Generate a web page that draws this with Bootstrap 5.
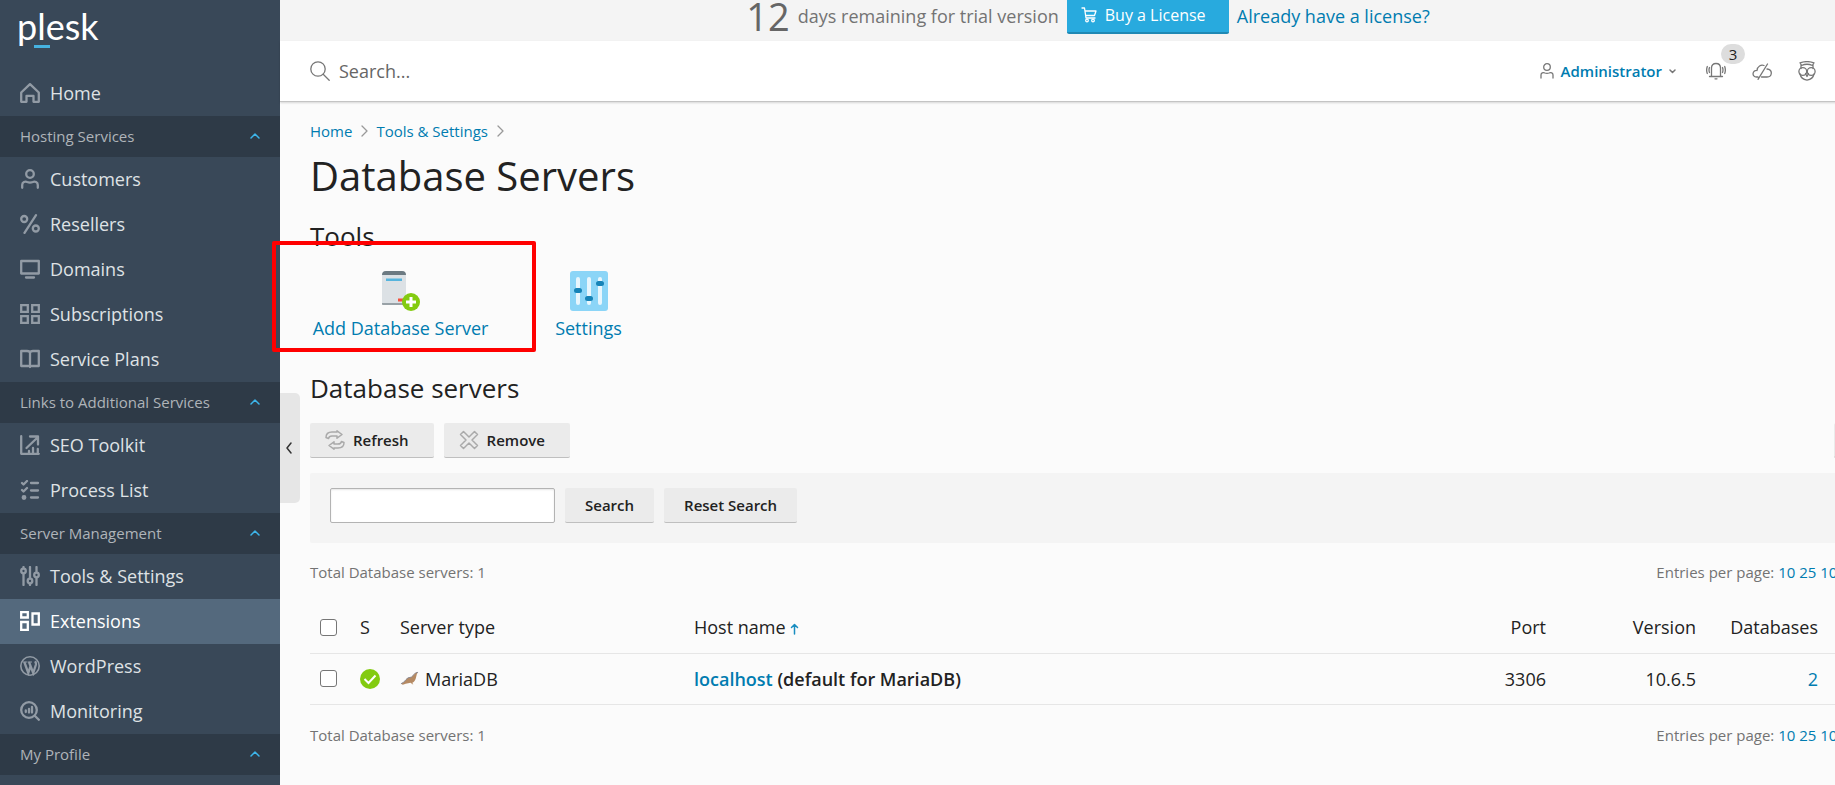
<!DOCTYPE html>
<html lang="en">
<head>
<meta charset="utf-8">
<meta name="viewport" content="width=device-width, initial-scale=1">
<title>Database Servers - Plesk</title>
<link rel="stylesheet" href="https://cdn.jsdelivr.net/npm/bootstrap@5.3.0/dist/css/bootstrap.min.css">
<style>
:root { --blue: #007cb0; --ink: #222; --muted-ink: #737373; }
body { font-family: "Open Sans", "Liberation Sans", sans-serif; font-size: 18px; line-height: 24px; color: var(--ink); background: #fbfbfb; }
a { color: var(--blue); text-decoration: none; }
a:hover { text-decoration: underline; }
svg { display: block; flex-shrink: 0; }
.shell { min-height: 100vh; overflow: hidden; }
.ln { fill: none; stroke: currentColor; stroke-width: 2; stroke-linejoin: round; stroke-linecap: round; }
.ln.thin { stroke-width: 1.3; }
.ln.mid { stroke-width: 1.5; }
.ln.square { stroke-linejoin: miter; }

.sidebar { width: 280px; background: #394858; padding-bottom: 10px; }
.logo { height: 71px; padding: 4px 17px 0; font-family: Lato, sans-serif; font-size: 36px; line-height: 44px; font-weight: 400; color: #fff; }
.logo:hover { text-decoration: none; }
.logo i { left: 34px; top: 45px; width: 16px; height: 3px; background: #46b2e0; }
.side-link { height: 45px; padding: 0 20px 1px; gap: 10px; color: #dfe2e5; }
.side-link svg { color: #929ba5; }
.side-link .ln { stroke-width: 2.3; }
.side-link.active, .side-link.active svg { color: #fff; }
.side-link.active { background: #54697d; }
.side-head { height: 41px; padding: 0 20px 2px; font-size: 15px; color: #afb4b9; background: #2e3a47; border: 0; text-align: left; }
.side-head svg { color: #3db5ea; }

.page-area { margin-right: -65px; }
.trial { height: 48px; margin-top: -7px; padding-bottom: 2px; background: #f4f4f4; color: #737373; }
.days-left { font-size: 38px; line-height: 46px; color: #666; }
.buy { height: 36px; width: 162px; padding: 0 14px; gap: 8px; font-size: 16px; color: #fff; background: #28aade; border: 0; border-bottom: 2px solid #2089b4; border-radius: 2px; }
.topbar { height: 61px; padding: 0 30px; background: #fff; border-bottom: 1px solid #c4c4c4; box-shadow: 0 1px 2px rgba(0,0,0,.15); }
.topbar svg { color: #777; }
.find-label { gap: 9px; }
.find { border: 0; outline: 0; width: 300px; padding: 0; background: transparent; }
.find::placeholder { color: #666; opacity: 1; }
.top-icons { gap: 26px; margin-right: 54px; }
.user-btn { border: 0; background: none; padding: 0; margin-right: 4px; gap: 7px; font-size: 15px; font-weight: 600; color: var(--blue); }
.icon-btn { border: 0; background: none; padding: 0; }
.count { left: 15px; top: -18px; width: 24px; height: 20px; border-radius: 10px; background: #ddd; font-size: 15px; line-height: 20px; color: #222; }

.content { padding: 17px 30px 0; }
.crumbs { font-size: 15px; gap: 8px; }
.crumbs svg { color: #999; }
h1 { font-size: 40px; line-height: 52px; font-weight: 400; margin: 7px 0 17px; }
h2 { font-size: 26px; line-height: 34px; font-weight: 500; margin: 0; }
.tools { gap: 64px; margin: 18px 0 31px; }
.tool-item { gap: 5px; min-width: 67px; }
.tool-item.first { min-width: 181px; }
.mark-box { left: -38px; top: -30px; width: 264px; height: 111px; border: 4px solid #f00; border-radius: 2px; pointer-events: none; }
.actions { margin-top: 18px; }
.actions, .actions > div, .filter { gap: 10px; }
.gbtn { height: 35px; padding: 0 20px; font-size: 15px; font-weight: 600; color: var(--ink); background: #ebebeb; border: 0; border-bottom: 1px solid #bfbfbf; border-radius: 2px; }
.gbtn.with-icon { padding: 0 25px 0 15px; gap: 8px; }
.gbtn.narrow { width: 36px; padding: 0; }
.gbtn svg { color: #aaa; }
.filter { margin: 15px 0 17px; padding: 15px 20px 20px; background: #f4f4f4; border-radius: 2px; }
.filter input { width: 225px; height: 35px; border: 1px solid #b3b3b3; border-radius: 2px; background: #fff; box-shadow: inset 0 1px 2px rgba(0,0,0,.1); padding: 0 8px; font-size: 16px; }
.pager { font-size: 15px; color: var(--muted-ink); }
.pager > :last-child { padding-right: 3px; }
.servers { margin: 18px 0; table-layout: fixed; width: 100%; }
.servers th, .servers td { height: 51px; padding: 0 10px; border-bottom: 1px solid #e6e6e6; font-weight: 400; vertical-align: middle; }
.servers .host { font-weight: 600; }
.servers .w-check { width: 40px; }
.servers .w-type { width: 294px; }
.servers .w-num { width: 150px; }
.servers .w-db { width: 122px; }
.servers .w-end { width: 42px; }
.sort { color: #188dc0; }
.server-kind { gap: 6px; }
.tick { width: 17px; height: 17px; margin: 0; display: block; appearance: none; background: #fff; border: 1px solid #767676; border-radius: 3px; }
.tick:checked { background: var(--blue); }
.collapse-tab { left: 280px; top: 393px; width: 20px; height: 110px; border: 0; padding: 0; background: #e6e6e6; border-radius: 0 5px 5px 0; color: #333; }
.collapse-tab svg { margin-left: 5px; }
</style>
</head>
<body>
<div class="shell d-flex position-relative">

<nav class="sidebar flex-shrink-0" aria-label="Main menu">
  <a class="logo d-block position-relative" href="#">plesk<i class="position-absolute"></i></a>
  <a class="side-link d-flex align-items-center" href="#"><svg class="ln" width="20" height="20" viewBox="0 0 20 20"><path d="M1.200 9.500 10 1.200l8.800 8.300v9.300h-5.300v-6h-7v6H1.200z"/></svg>Home</a>
  <button class="side-head w-100 d-flex align-items-center justify-content-between">Hosting Services<svg class="ln mid" width="10" height="6" viewBox="0 0 10 6"><path d="m1 5 4-4 4 4"/></svg></button>
  <a class="side-link d-flex align-items-center" href="#"><svg class="ln" width="20" height="20" viewBox="0 0 20 20"><circle cx="10" cy="5" r="3.800"/><path d="M2.200 18.800V16c0-3 3-4 5-3 2 .8 3.600.8 5.600 0 2-1 5 0 5 3v2.800"/></svg>Customers</a>
  <a class="side-link d-flex align-items-center" href="#"><svg class="ln" width="20" height="20" viewBox="0 0 20 20"><circle cx="4.200" cy="5" r="3"/><circle cx="15.800" cy="14.500" r="3"/><path d="M16 1.200 4.500 18.800"/></svg>Resellers</a>
  <a class="side-link d-flex align-items-center" href="#"><svg class="ln" width="20" height="20" viewBox="0 0 20 20"><path d="M1.200 2h17.600v12.500H1.200zM6 18.500h8"/></svg>Domains</a>
  <a class="side-link d-flex align-items-center" href="#"><svg class="ln square" width="20" height="20" viewBox="0 0 20 20"><path d="M1.200 1.200h6.600v6.600H1.200zM12.200 1.200h6.600v6.600h-6.600zM1.200 12.200h6.600v6.600H1.200zM12.200 12.200h6.600v6.600h-6.600z"/></svg>Subscriptions</a>
  <a class="side-link d-flex align-items-center" href="#"><svg class="ln" width="20" height="20" viewBox="0 0 20 20"><path d="M1.200 2H7q3 0 3 2 0-2 3-2h5.800v15H12q-2 0-2 1 0-1-2-1H1.200zM10 4v14"/></svg>Service Plans</a>
  <button class="side-head w-100 d-flex align-items-center justify-content-between">Links to Additional Services<svg class="ln mid" width="10" height="6" viewBox="0 0 10 6"><path d="m1 5 4-4 4 4"/></svg></button>
  <a class="side-link d-flex align-items-center" href="#"><svg class="ln" width="20" height="20" viewBox="0 0 20 20"><path d="M1.200 1.200v17.600h17.600M6.500 13 17 3M10 1.500h8v8M9 18v-2M13 18v-5M17.800 18v-4"/></svg>SEO Toolkit</a>
  <a class="side-link d-flex align-items-center" href="#"><svg class="ln" width="20" height="20" viewBox="0 0 20 20"><path d="M11 3h7M11 10.500h7M11 17.500h7M2 3l1.500 1.500L7 1M2 10l1.500 1.500L7 8"/><circle cx="4" cy="17.500" r="1.300" fill="currentColor"/></svg>Process List</a>
  <button class="side-head w-100 d-flex align-items-center justify-content-between">Server Management<svg class="ln mid" width="10" height="6" viewBox="0 0 10 6"><path d="m1 5 4-4 4 4"/></svg></button>
  <a class="side-link d-flex align-items-center" href="#"><svg class="ln" width="20" height="20" viewBox="0 0 20 20"><circle cx="3.500" cy="5" r="2.300"/><circle cx="10" cy="15" r="2.300"/><circle cx="16.500" cy="9" r="2.300"/><path d="M3.500 1v1M3.500 8v11M10 1v11M10 18v1M16.500 1v5M16.500 12v7"/></svg>Tools &amp; Settings</a>
  <a class="side-link active d-flex align-items-center" href="#" aria-current="page"><svg class="ln square" width="20" height="20" viewBox="0 0 20 20"><path d="M1.200 1.200h6.600v5.300H1.200zM1.200 11h6.600v7.800H1.200zM12.500 2.500h6.300v11h-6.300z"/></svg>Extensions</a>
  <a class="side-link d-flex align-items-center" href="#"><svg width="20" height="20" viewBox="0 0 20 20" fill="none" stroke="currentColor"><circle cx="10" cy="10" r="9.200" stroke-width="1.600"/><path stroke-width="2.300" d="m4.300 6 4 11L10.500 10M9 6l4.200 11 2.600-8q.6-2-.8-3.800"/><path d="M2.500 6h4.500M7.500 6h4.500"/></svg>WordPress</a>
  <a class="side-link d-flex align-items-center" href="#"><svg class="ln" width="20" height="20" viewBox="0 0 20 20"><circle cx="9" cy="9" r="7.800"/><path d="m15 15 3.800 3.800M5.800 9.500V11M9 8v3.500M12 6v5.500"/></svg>Monitoring</a>
  <button class="side-head w-100 d-flex align-items-center justify-content-between">My Profile<svg class="ln mid" width="10" height="6" viewBox="0 0 10 6"><path d="m1 5 4-4 4 4"/></svg></button>
</nav>

<div class="page-area flex-grow-1">
  <div class="trial d-flex align-items-center justify-content-center">
    <span class="days-left me-2">12</span>
    <span class="me-2">days remaining for trial version</span>
    <button class="buy d-flex align-items-center me-2"><svg class="ln thin" width="16" height="16" viewBox="0 0 16 16"><path d="M1 1h2.500l1.500 10h9M4 4h11l-1.500 4.500H5"/><circle cx="6" cy="13.500" r="1.300"/><circle cx="12" cy="13.500" r="1.300"/></svg>Buy a License</button>
    <a class="pe-1" href="#">Already have a license?</a>
  </div>
  <header class="topbar d-flex align-items-center justify-content-between">
    <label class="find-label d-flex align-items-center"><svg class="ln thin" width="20" height="20" viewBox="0 0 20 20"><circle cx="8" cy="8" r="7.200"/><path d="m13.200 13.200 6 6"/></svg><input class="find" type="search" placeholder="Search..." aria-label="Search"></label>
    <div class="top-icons d-flex align-items-center">
      <button class="user-btn d-flex align-items-center"><svg class="ln thin" width="14" height="16" viewBox="0 0 14 16"><circle cx="7" cy="4" r="3.300"/><path d="M1 15v-3c0-2 2-3 4-2q2 .8 4 0c2-1 4 0 4 2v3"/></svg><span>Administrator</span><svg class="ln mid" width="7" height="5" viewBox="0 0 7 5"><path d="m1 1 2.500 2.500L6 1"/></svg></button>
      <button class="icon-btn position-relative" aria-label="Notifications"><svg class="ln thin" width="20" height="18" viewBox="0 0 20 18"><path d="M5.500 14V6q0-4.500 4.500-4.500T14.500 6v8M3.500 14.500h13M9 16.800h2M3.500 5.500q-1 2.500 0 5M1.300 4.500q-1.300 3.500 0 7M16.500 5.500q1 2.500 0 5M18.700 4.500q1.300 3.500 0 7"/></svg><span class="count position-absolute">3</span></button>
      <button class="icon-btn" aria-label="Cloud"><svg class="ln thin" width="20" height="17" viewBox="0 0 20 17"><path d="M6 14H4.500C-.5 14 .2 7 5 7.500 5.500 3 9 1.500 12 2.500M15 6q4.500.5 4.300 4.200Q19 14 15 14H9.500M15.500 1 6 16.300"/></svg></button>
      <button class="icon-btn" aria-label="Advisor"><svg class="ln thin" width="18" height="20" viewBox="0 0 18 20"><path d="M2 1.800Q9-.6 16 1.800L14.500 4.500Q9 2 3.500 4.500zM3 4.500v3M15 4.500v3M2 13q1 5 7 6.200 6-1.200 7-6.200M7.500 12.500 9 15.500l1.500-3"/><circle cx="4.800" cy="10.500" r="3.900"/><circle cx="13.200" cy="10.500" r="3.900"/></svg></button>
    </div>
  </header>

  <main class="content">
    <nav class="crumbs d-flex align-items-center" aria-label="Breadcrumb">
      <a href="#">Home</a><svg class="ln thin" width="8" height="12" viewBox="0 0 8 12"><path d="m2 1 5 5-5 5"/></svg>
      <a href="#">Tools &amp; Settings</a><svg class="ln thin" width="8" height="12" viewBox="0 0 8 12"><path d="m2 1 5 5-5 5"/></svg>
    </nav>
    <h1>Database Servers</h1>
    <h2>Tools</h2>
    <div class="tools d-flex position-relative">
      <a class="tool-item first d-flex flex-column align-items-center" href="#">
        <svg width="38" height="40" viewBox="0 0 38 40"><path d="M0 4 2 0h20l2 4v29q0 1-1 1H1q-1 0-1-1z" fill="#dce1e5"/><path d="M0 4q0-4 4-4h16q4 0 4 4z" fill="#6c7a82"/><path d="M0 32h24v1q0 1-1 1H1q-1 0-1-1z" fill="#98a1a6"/><path d="M4 7.500h16v2.500H4z" fill="#56b4dd"/><path d="M16 27.500h5v3h-5z" fill="#f4503c"/><circle cx="29" cy="31" r="9" fill="#83cb10"/><path d="M29 26v10M24 31h10" stroke="#fff" stroke-width="3"/></svg>
        Add Database Server</a>
      <a class="tool-item d-flex flex-column align-items-center" href="#">
        <svg width="38" height="40" viewBox="0 0 38 40"><rect width="38" height="40" rx="3" fill="#8bd5f7"/><path d="M8 8v24M19 8v24M30 8v24" stroke="#e8f6fd" stroke-width="4" stroke-linecap="round"/><g fill="#1683b7"><rect x="4" y="17" width="8" height="5" rx="2.500"/><rect x="15" y="25" width="8" height="5" rx="2.500"/><rect x="26" y="10" width="8" height="5" rx="2.500"/></g></svg>
        Settings</a>
      <div class="mark-box position-absolute"></div>
    </div>
    <h2>Database servers</h2>
    <div class="actions d-flex justify-content-between">
      <div class="d-flex">
        <button class="gbtn with-icon d-flex align-items-center"><svg class="ln mid" width="20" height="20" viewBox="0 0 20 20"><path d="M1 7.500Q1 2 7 2h5V.8l5 3.700-5 3.700V6H7Q4 6 3.500 8.500zM19 12.500q0 5.500-6 5.500H9v1.200l-5-3.700 5-3.700V14h4q3 0 3.500-2.500z"/></svg>Refresh</button>
        <button class="gbtn with-icon d-flex align-items-center"><svg class="ln mid" width="20" height="20" viewBox="0 0 20 20"><path d="M4.500 1.500 10 7l5.500-5.500 3 3L13 10l5.500 5.500-3 3L10 13l-5.500 5.500-3-3L7 10 1.500 4.500z"/></svg>Remove</button>
      </div>
      <button class="gbtn narrow" aria-label="Show filter"></button>
    </div>
    <form class="filter d-flex">
      <input type="text" aria-label="Server name">
      <button class="gbtn" type="button">Search</button>
      <button class="gbtn" type="button">Reset Search</button>
    </form>
    <div class="pager d-flex justify-content-between"><span>Total Database servers: 1</span><span>Entries per page: <a href="#">10</a> <a href="#">25</a> <a href="#">100</a> <a href="#">All</a></span></div>
    <table class="servers">
      <colgroup><col class="w-check"><col class="w-check"><col class="w-type"><col><col class="w-num"><col class="w-num"><col class="w-db"><col class="w-end"></colgroup>
      <thead><tr><th><input class="tick" type="checkbox" aria-label="Select all"></th><th>S</th><th>Server type</th><th>Host name <svg class="ln mid sort d-inline-block" width="9" height="12" viewBox="0 0 9 12"><path d="M4.500 11V1.500M1.500 4.500l3-3 3 3"/></svg></th><th class="text-end">Port</th><th class="text-end">Version</th><th class="text-end">Databases</th><th></th></tr></thead>
      <tbody><tr><td><input class="tick" type="checkbox" aria-label="Select localhost"></td>
        <td><svg width="20" height="20" viewBox="0 0 20 20"><circle cx="10" cy="10" r="10" fill="#83cb10"/><path d="m4.500 10 4 4 7-7.500" fill="none" stroke="#fff" stroke-width="2"/></svg></td>
        <td><span class="server-kind d-flex align-items-center"><svg width="19" height="16" viewBox="0 0 20 16"><path d="M1 13q3-1 5-4 2-3 6-3l3-3q1-2 4-2-2 2-2 5-1 5-4 6l1 2-3-2-5 1-3 1z" fill="#b58a63"/><path d="M1 13q3-1 5-4 2-3 6-3l3-3q1-2 4-2" fill="none" stroke="#8b8a94"/></svg><span>MariaDB</span></span></td>
        <td class="host"><a href="#">localhost</a> (default for MariaDB)</td><td class="text-end">3306</td><td class="text-end">10.6.5</td><td class="text-end"><a href="#">2</a></td><td></td></tr></tbody>
    </table>
    <div class="pager d-flex justify-content-between"><span>Total Database servers: 1</span><span>Entries per page: <a href="#">10</a> <a href="#">25</a> <a href="#">100</a> <a href="#">All</a></span></div>
  </main>
</div>
<button class="collapse-tab position-absolute" aria-label="Collapse menu"><svg class="ln mid" width="8" height="12" viewBox="0 0 8 12"><path d="M6 1 2 6l4 5"/></svg></button>
</div>
<script src="https://cdn.jsdelivr.net/npm/bootstrap@5.3.0/dist/js/bootstrap.bundle.min.js"></script>
</body>
</html>
